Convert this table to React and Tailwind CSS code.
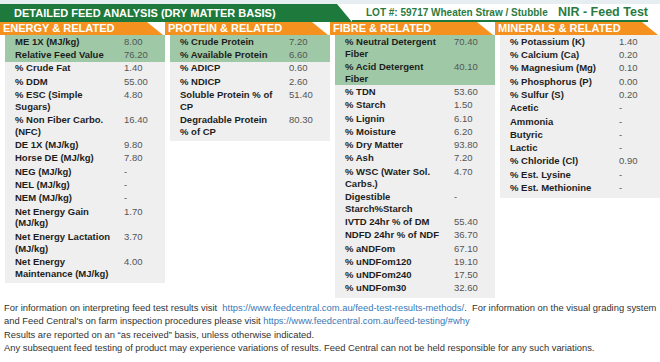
import React from 'react';

const sections = [
  {
    title: 'ENERGY & RELATED',
    rows: [
      { label: 'ME 1X (MJ/kg)', value: '8.00', hl: true },
      { label: 'Relative Feed Value', value: '76.20', hl: true },
      { label: '% Crude Fat', value: '1.40' },
      { label: '% DDM', value: '55.00' },
      { label: '% ESC (Simple Sugars)', value: '4.80' },
      { label: '% Non Fiber Carbo. (NFC)', value: '16.40' },
      { label: 'DE 1X (MJ/kg)', value: '9.80' },
      { label: 'Horse DE (MJ/kg)', value: '7.80' },
      { label: 'NEG (MJ/kg)', value: '-' },
      { label: 'NEL (MJ/kg)', value: '-' },
      { label: 'NEM (MJ/kg)', value: '-' },
      { label: 'Net Energy Gain (MJ/kg)', value: '1.70' },
      { label: 'Net Energy Lactation (MJ/kg)', value: '3.70' },
      { label: 'Net Energy Maintenance (MJ/kg)', value: '4.00' },
    ],
  },
  {
    title: 'PROTEIN & RELATED',
    rows: [
      { label: '% Crude Protein', value: '7.20', hl: true },
      { label: '% Available Protein', value: '6.60', hl: true },
      { label: '% ADICP', value: '0.60' },
      { label: '% NDICP', value: '2.60' },
      { label: 'Soluble Protein % of CP', value: '51.40' },
      { label: 'Degradable Protein % of CP', value: '80.30' },
    ],
  },
  {
    title: 'FIBRE & RELATED',
    rows: [
      { label: '% Neutral Detergent Fiber', value: '70.40', hl: true },
      { label: '% Acid Detergent Fiber', value: '40.10', hl: true },
      { label: '% TDN', value: '53.60' },
      { label: '% Starch', value: '1.50' },
      { label: '% Lignin', value: '6.10' },
      { label: '% Moisture', value: '6.20' },
      { label: '% Dry Matter', value: '93.80' },
      { label: '% Ash', value: '7.20' },
      { label: '% WSC (Water Sol. Carbs.)', value: '4.70' },
      { label: 'Digestible Starch%Starch', value: '-' },
      { label: 'IVTD 24hr % of DM', value: '55.40' },
      { label: 'NDFD 24hr % of NDF', value: '36.70' },
      { label: '% aNDFom', value: '67.10' },
      { label: '% uNDFom120', value: '19.10' },
      { label: '% uNDFom240', value: '17.50' },
      { label: '% uNDFom30', value: '32.60' },
    ],
  },
  {
    title: 'MINERALS & RELATED',
    rows: [
      { label: '% Potassium (K)', value: '1.40' },
      { label: '% Calcium (Ca)', value: '0.20' },
      { label: '% Magnesium (Mg)', value: '0.10' },
      { label: '% Phosphorus (P)', value: '0.00' },
      { label: '% Sulfur (S)', value: '0.20' },
      { label: 'Acetic', value: '-' },
      { label: 'Ammonia', value: '-' },
      { label: 'Butyric', value: '-' },
      { label: 'Lactic', value: '-' },
      { label: '% Chloride (Cl)', value: '0.90' },
      { label: '% Est. Lysine', value: '-' },
      { label: '% Est. Methionine', value: '-' },
    ],
  },
];

const Row = ({ label, value, hl }) => (
  <div className={`flex items-start py-[0.75px] pl-[10px] ${hl ? 'bg-[#9fc9a6]' : ''}`}>
    <div className="w-[97px] shrink-0 text-[9.5px] leading-[11.8px] font-bold text-[#1d1d1d]">{label}</div>
    <div className="ml-[12px] text-[9.5px] leading-[11.8px] text-[#555]">{value}</div>
  </div>
);

const Section = ({ title, rows }) => (
  <div className="flex flex-col">
    <div className="h-[13px] bg-[#f5921f] pl-[3px] text-[11px] leading-[13px] font-bold text-white [clip-path:polygon(0_0,calc(100%-18px)_0,calc(100%-2px)_100%,0_100%)]">
      {title}
    </div>
    <div className="ml-[5px] bg-[#efefef] pb-[3px]">
      {rows.map((r) => (
        <Row key={r.label} {...r} />
      ))}
    </div>
  </div>
);

export default function App() {
  return (
    <div className="w-[660px] h-[362px] overflow-hidden bg-white font-['Liberation_Sans',Arial,sans-serif]">
      <div className="h-[4px] bg-[#e7eef1]" />
      <div className="flex h-[18px]">
        <div className="w-[352px] shrink-0 bg-[#1e7a3c] pl-[14px] text-[11px] leading-[18px] font-bold text-white [clip-path:polygon(0_0,337px_0,100%_100%,0_100%)]">
          DETAILED FEED ANALYSIS (DRY MATTER BASIS)
        </div>
        <div className="mr-[12px] flex flex-1 items-center border-b-2 border-[#1e7a3c] pl-[14px]">
          <span className="text-[10px] font-bold text-[#2b7b41]">LOT #: 59717 Wheaten Straw / Stubble</span>
          <span className="ml-auto text-[12.5px] font-bold text-[#2b7b41]">NIR - Feed Test</span>
        </div>
      </div>
      <div className="grid grid-cols-4 items-start">
        {sections.map((s) => (
          <Section key={s.title} {...s} />
        ))}
      </div>
      <div className="mt-[3px] pl-[4px] text-[9.4px] leading-[13.3px] text-[#333] whitespace-nowrap">
        <div>
          For information on interpreting feed test results visit&nbsp;{' '}
          <span className="text-[#3a78b5]">https://www.feedcentral.com.au/feed-test-results-methods/</span>.&nbsp; For
          information on the visual grading system
        </div>
        <div>
          and Feed Central's on farm inspection procedures please visit{' '}
          <span className="text-[#3a78b5]">https://www.feedcentral.com.au/feed-testing/#why</span>
        </div>
        <div>Results are reported on an “as received” basis, unless otherwise indicated.</div>
        <div>
          Any subsequent feed testing of product may experience variations of results. Feed Central can not be held
          responsible for any such variations.
        </div>
      </div>
    </div>
  );
}
